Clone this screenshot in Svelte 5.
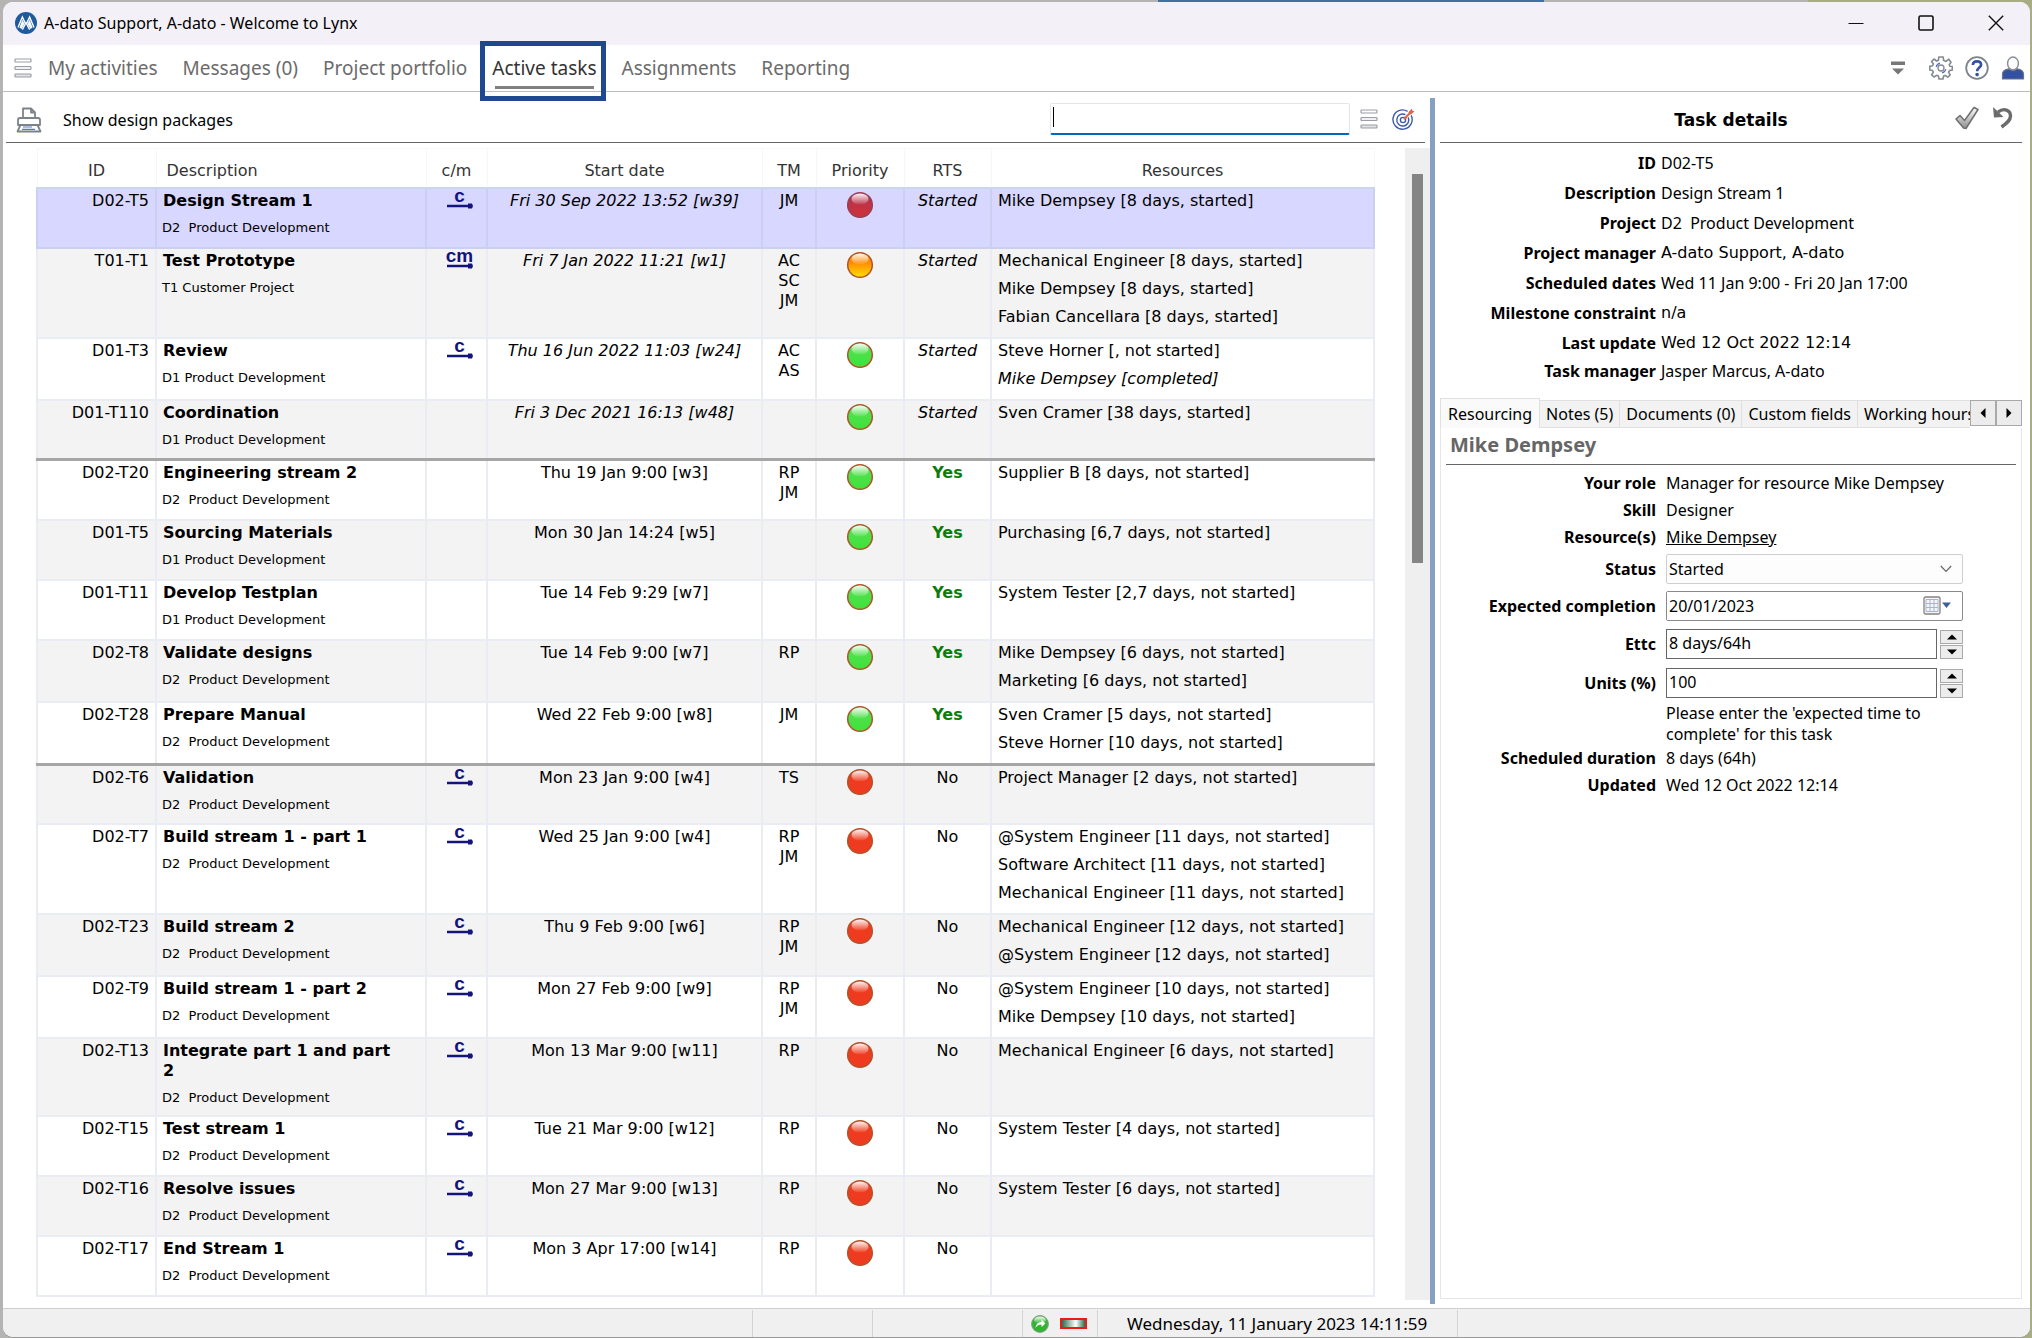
<script>
  const nav = ['My activities', 'Messages (0)', 'Project portfolio', 'Active tasks', 'Assignments', 'Reporting'];
  let active = $state('Active tasks');
  let query = $state('');
  let selected = $state('D02-T5');
  let tab = $state('Resourcing');
  let status = $state('Started');
  let completion = $state('20/01/2023');
  let ettc = $state('8 days/64h');
  let units = $state('100');

  const P1 = 'D1 Product Development';
  const P2 = 'D2\u00a0 Product Development';
  const t = (id, name, project, cm, date, tm, color, rts, res, end = false) => ({ id, name, project, cm, date, tm, color, rts, res, end });
  const tasks = [
    t('D02-T5', 'Design Stream 1', P2, 'c', 'Fri 30 Sep 2022 13:52 [w39]', ['JM'], 'red', 'Started', ['Mike Dempsey [8 days, started]']),
    t('T01-T1', 'Test Prototype', 'T1 Customer Project', 'cm', 'Fri 7 Jan 2022 11:21 [w1]', ['AC', 'SC', 'JM'], 'orange', 'Started', ['Mechanical Engineer [8 days, started]', 'Mike Dempsey [8 days, started]', 'Fabian Cancellara [8 days, started]']),
    t('D01-T3', 'Review', P1, 'c', 'Thu 16 Jun 2022 11:03 [w24]', ['AC', 'AS'], 'green', 'Started', ['Steve Horner [, not started]', 'Mike Dempsey [completed]']),
    t('D01-T110', 'Coordination', P1, '', 'Fri 3 Dec 2021 16:13 [w48]', [], 'green', 'Started', ['Sven Cramer [38 days, started]'], true),
    t('D02-T20', 'Engineering stream 2', P2, '', 'Thu 19 Jan 9:00 [w3]', ['RP', 'JM'], 'green', 'Yes', ['Supplier B [8 days, not started]']),
    t('D01-T5', 'Sourcing Materials', P1, '', 'Mon 30 Jan 14:24 [w5]', [], 'green', 'Yes', ['Purchasing [6,7 days, not started]']),
    t('D01-T11', 'Develop Testplan', P1, '', 'Tue 14 Feb 9:29 [w7]', [], 'green', 'Yes', ['System Tester [2,7 days, not started]']),
    t('D02-T8', 'Validate designs', P2, '', 'Tue 14 Feb 9:00 [w7]', ['RP'], 'green', 'Yes', ['Mike Dempsey [6 days, not started]', 'Marketing [6 days, not started]']),
    t('D02-T28', 'Prepare Manual', P2, '', 'Wed 22 Feb 9:00 [w8]', ['JM'], 'green', 'Yes', ['Sven Cramer [5 days, not started]', 'Steve Horner [10 days, not started]'], true),
    t('D02-T6', 'Validation', P2, 'c', 'Mon 23 Jan 9:00 [w4]', ['TS'], 'red', 'No', ['Project Manager [2 days, not started]']),
    t('D02-T7', 'Build stream 1 - part 1', P2, 'c', 'Wed 25 Jan 9:00 [w4]', ['RP', 'JM'], 'red', 'No', ['@System Engineer [11 days, not started]', 'Software Architect [11 days, not started]', 'Mechanical Engineer [11 days, not started]']),
    t('D02-T23', 'Build stream 2', P2, 'c', 'Thu 9 Feb 9:00 [w6]', ['RP', 'JM'], 'red', 'No', ['Mechanical Engineer [12 days, not started]', '@System Engineer [12 days, not started]']),
    t('D02-T9', 'Build stream 1 - part 2', P2, 'c', 'Mon 27 Feb 9:00 [w9]', ['RP', 'JM'], 'red', 'No', ['@System Engineer [10 days, not started]', 'Mike Dempsey [10 days, not started]']),
    t('D02-T13', 'Integrate part 1 and part 2', P2, 'c', 'Mon 13 Mar 9:00 [w11]', ['RP'], 'red', 'No', ['Mechanical Engineer [6 days, not started]']),
    t('D02-T15', 'Test stream 1', P2, 'c', 'Tue 21 Mar 9:00 [w12]', ['RP'], 'red', 'No', ['System Tester [4 days, not started]']),
    t('D02-T16', 'Resolve issues', P2, 'c', 'Mon 27 Mar 9:00 [w13]', ['RP'], 'red', 'No', ['System Tester [6 days, not started]']),
    t('D02-T17', 'End Stream 1', P2, 'c', 'Mon 3 Apr 17:00 [w14]', ['RP'], 'red', 'No', [])
  ];
  const details = [
    ['ID', 'D02-T5'],
    ['Description', 'Design Stream 1'],
    ['Project', P2],
    ['Project manager', 'A-dato Support, A-dato', true],
    ['Scheduled dates', 'Wed 11 Jan 9:00 - Fri 20 Jan 17:00'],
    ['Milestone constraint', 'n/a', true],
    ['Last update', 'Wed 12 Oct 2022 12:14', true],
    ['Task manager', 'Jasper Marcus, A-dato']
  ];
  const tabs = ['Resourcing', 'Notes (5)', 'Documents (0)', 'Custom fields', 'Working hours'];
</script>

{#snippet bars()}
  <svg class="bars" width="18" height="20" viewBox="0 0 18 20" aria-hidden="true">
    <g fill="#fff" stroke="#9a9da3" stroke-width="1.2">
      <rect x="1" y="1" width="16" height="3" rx=".8" />
      <rect x="1" y="8.5" width="16" height="3" rx=".8" fill="#eef0f4" />
      <rect x="1" y="16" width="16" height="3" rx=".8" fill="#e0e2e6" />
    </g>
  </svg>
{/snippet}

{#snippet arrow(dir)}
  <svg width="10" height="10" viewBox="0 0 10 10" aria-hidden="true" class="arrow {dir}">
    <path d="M0 7.5 L5 2.5 L10 7.5 Z" fill="currentColor" />
  </svg>
{/snippet}

<svg class="defs" width="0" height="0" aria-hidden="true">
  <defs>
    <linearGradient id="g-red" x1="0" y1="0" x2="0" y2="1"><stop offset="0" stop-color="#ef3b1c" /><stop offset="1" stop-color="#ee3a20" /></linearGradient>
    <linearGradient id="g-sel" x1="0" y1="0" x2="0" y2="1"><stop offset="0" stop-color="#b23452" /><stop offset="1" stop-color="#cf3036" /></linearGradient>
    <linearGradient id="g-orange" x1="0" y1="0" x2="0" y2="1"><stop offset=".4" stop-color="#ff8a00" /><stop offset="1" stop-color="#ffe000" /></linearGradient>
    <linearGradient id="g-green" x1="0" y1="0" x2="0" y2="1"><stop offset=".2" stop-color="#52e050" /><stop offset="1" stop-color="#3fe23a" /></linearGradient>
    <linearGradient id="shine" x1="0" y1="0" x2="0" y2="1"><stop offset="0" stop-color="#fff" stop-opacity=".95" /><stop offset="1" stop-color="#fff" stop-opacity=".05" /></linearGradient>
    <linearGradient id="steel" x1="0" y1="0" x2="0" y2="1"><stop offset="0" stop-color="#fff" /><stop offset="1" stop-color="#8d8d8d" /></linearGradient>
  </defs>
</svg>

<div class="desktop">
  <div class="window">
    <header class="title">
      <svg width="22" height="22" viewBox="0 0 22 22" aria-hidden="true">
        <circle cx="11" cy="11" r="11" fill="#1f5a9d" />
        <path d="M3 15.5 L7.4 5 L10.4 11.5 M11.6 11.5 L14.6 5 L19 15.5" fill="none" stroke="#fff" stroke-width="1.4" />
        <path d="M4.4 15.4 L7.4 7.4 L9.6 12 L6.6 17 Z M17.6 15.4 L14.6 7.4 L12.4 12 L15.4 17 Z" fill="#f2f7fc" />
        <path d="M7.4 17.6 L11 10.6 L14.6 17.6" fill="none" stroke="#fff" stroke-width="1.3" />
      </svg>
      <span class="caption">A-dato Support, A-dato - Welcome to Lynx</span>
      <div class="wincontrols">
        <button aria-label="Minimize"><svg width="16" height="16" viewBox="0 0 16 16"><path d="M.5 8.5 H15.5" stroke="#111" stroke-width="1.2" /></svg></button>
        <button aria-label="Maximize"><svg width="16" height="16" viewBox="0 0 16 16"><rect x="1" y="1" width="14" height="14" rx="1.5" fill="none" stroke="#111" stroke-width="1.6" /></svg></button>
        <button aria-label="Close"><svg width="16" height="16" viewBox="0 0 16 16"><path d="M.8 .8 L15.2 15.2 M15.2 .8 L.8 15.2" stroke="#111" stroke-width="1.4" /></svg></button>
      </div>
    </header>

    <nav class="menu">
      <button class="icon" aria-label="Menu">{@render bars()}</button>
      {#each nav as item}
        <button class="navitem" class:active={active === item} onclick={() => (active = item)}><span>{item}</span></button>
      {/each}
      <div class="tools">
        <button class="icon more" aria-label="More"><svg width="14" height="16" viewBox="0 0 14 16"><path d="M0 1.5 H14 V5 H0 Z M1 8.5 H13 L7 14.5 Z" fill="#777" /></svg></button>
        <button class="icon" aria-label="Settings">
          <svg width="24" height="24" viewBox="0 0 24 24" fill="none" stroke="#858a92" stroke-width="1.6" stroke-linejoin="round">
            <path d="M9.8 1 H14.2 L14.6 4.3 L17 5.4 L19.8 3.2 L22 6.2 L20.2 8.8 L20.8 10.2 L23.3 10.5 V14 L20.4 14.6 L19.6 16.4 L21.2 19 L18.8 21.2 L16.2 19.4 L14.6 20 L14 23 H10 L9.4 20 L7.6 19.3 L5 21 L2.6 18.6 L4.3 16.2 L3.6 14.5 L.8 14 V10.4 L3.6 9.8 L4.4 8 L2.6 5.6 L5 3 L7.6 5 L9.4 4.2 Z" />
            <path d="M7.2 11 A5 5 0 0 1 11 7.2 M16.8 13.2 A5 5 0 0 1 13 16.9" stroke="#5a74c4" stroke-width="1.3" />
            <circle cx="12" cy="12" r="3" stroke-width="1.3" />
          </svg>
        </button>
        <button class="icon" aria-label="Help">
          <svg width="24" height="24" viewBox="0 0 24 24" fill="none">
            <circle cx="12" cy="12" r="10.8" stroke="#7d838c" stroke-width="1.8" />
            <path d="M7.9 9 C8 6.6 9.7 5.4 12 5.4 C14.5 5.4 16.1 6.8 16.1 8.8 C16.1 11.6 12.2 11.7 12.2 15.2" stroke="#3350a2" stroke-width="2.6" />
            <circle cx="12.1" cy="18.6" r="1.8" fill="#3350a2" />
          </svg>
        </button>
        <button class="icon" aria-label="Account">
          <svg width="24" height="24" viewBox="0 0 24 24">
            <path d="M1.5 23 V18 C1.5 14.8 4 13.4 8 12.8 C10.5 15 13.5 15 16 12.8 C20 13.4 22.5 14.8 22.5 18 V23 Z" fill="#3350a2" stroke="#6c7486" stroke-width="1.2" />
            <ellipse cx="12" cy="7.4" rx="5.4" ry="6.4" fill="#fff" stroke="#8b9098" stroke-width="1.5" />
          </svg>
        </button>
      </div>
    </nav>

    <main>
      <section class="list">
        <div class="toolbar">
          <button class="icon" aria-label="Print">
            <svg width="26" height="26" viewBox="0 0 26 26" fill="none" stroke="#7d838a" stroke-width="1.8" stroke-linejoin="round">
              <path d="M7 11 V1.5 H15 L19 5.5 V11 M15 1.5 V5.5 H19" />
              <path d="M2 18 V13 Q2 11 4 11 H22 Q24 11 24 13 V18 Z" />
              <path d="M4.5 18 H21.5 L24.5 24.5 H1.5 Z" fill="#fff" />
              <path d="M7 20 H16 M6 22.4 H19" stroke="#5b74c2" stroke-width="1.2" />
            </svg>
          </button>
          <button class="link">Show design packages</button>
          <div class="search">
            <div class="searchbox"><input type="text" aria-label="Search" bind:value={query} /></div>
            <button class="icon" aria-label="Search options">{@render bars()}</button>
            <button class="icon" aria-label="Focus task">
              <svg width="23" height="23" viewBox="0 0 23 23" fill="none" stroke="#3d5bab" stroke-width="1.4">
                <path d="M19.2 7.4 A9.6 9.6 0 1 1 15.6 3.4" />
                <path d="M16.2 9.4 A6 6 0 1 1 13.4 6.6" />
                <circle cx="11" cy="12" r="2.6" />
                <path d="M12 11 L18 5" stroke="#d9674f" stroke-width="2" />
                <path d="M16.6 4 L20 .6 L20.4 2.8 L22.6 3.2 L19 6.6 L16.8 6.4 Z M11.6 11.6 L12.8 8.2 L15 10.4 Z" fill="#d9674f" stroke="none" />
              </svg>
            </button>
          </div>
        </div>

        <div class="scroller">
          <div class="tablewrap">
            <table>
              <colgroup><col class="c1" /><col class="c2" /><col class="c3" /><col class="c4" /><col class="c5" /><col class="c6" /><col class="c7" /><col /></colgroup>
              <thead>
                <tr><th>ID</th><th class="desc">Description</th><th>c/m</th><th>Start date</th><th>TM</th><th>Priority</th><th>RTS</th><th>Resources</th></tr>
              </thead>
              <tbody>
                {#each tasks as task}
                  <tr class:selected={selected === task.id} class:groupend={task.end} onclick={() => (selected = task.id)}>
                    <td class="id">{task.id}</td>
                    <td class="desc"><strong>{task.name}</strong><small>{task.project}</small></td>
                    <td class="cm">
                      {#if task.cm}<span class="mark">{task.cm}</span><svg width="26" height="6" viewBox="0 0 26 6" aria-hidden="true"><path d="M0 1.8 H21 V.6 H25 L26 3 L25 5.4 H21 V4.2 H0 Z" fill="#14147c" /></svg>{/if}
                    </td>
                    <td class="mid" class:it={task.rts === 'Started'}>{task.date}</td>
                    <td class="mid">{#each task.tm as m}<div>{m}</div>{/each}</td>
                    <td class="mid ball">
                      <svg width="28" height="28" viewBox="0 0 28 28" role="img" aria-label={task.color}>
                        <circle cx="14" cy="14" r="12.3" fill="url(#g-{selected === task.id ? 'sel' : task.color})" stroke={selected === task.id ? '#93405c' : '#b0542c'} stroke-width="1.5" />
                        <ellipse cx="14" cy="8" rx="8.5" ry="5.6" fill="url(#shine)" />
                      </svg>
                    </td>
                    <td class="mid" class:it={task.rts === 'Started'} class:yes={task.rts === 'Yes'}>{task.rts}</td>
                    <td class="res">{#each task.res as r}<div class:it={r.includes('completed')}>{r}</div>{/each}</td>
                  </tr>
                {/each}
              </tbody>
            </table>
          </div>
          <div class="track"><div class="thumb"></div></div>
        </div>
      </section>

      <aside>
        <div class="asidehead">
          <h2>Task details</h2>
          <div class="actions">
            <button class="icon" aria-label="Apply"><svg width="24" height="24" viewBox="0 0 24 24"><path d="M1 13 L5 9.5 L9.5 14.5 L19 1.5 L23 3.5 L11 22.5 L8.5 22 Z" fill="url(#steel)" stroke="#6f6f6f" stroke-width="1.5" stroke-linejoin="round" /></svg></button>
            <button class="icon" aria-label="Undo"><svg width="20" height="24" viewBox="0 0 20 24"><path d="M5 6 C11 1.5 17.5 4 17.5 10 C17.5 14.5 13.5 17.5 8.5 21" fill="none" stroke="#6b6b6b" stroke-width="3.4" /><path d="M0 1 L1 11.5 L10.5 11 Z" fill="#6b6b6b" /></svg></button>
          </div>
        </div>
        <dl class="details">
          {#each details as [k, v, wide]}
            <dt>{k}</dt><dd class:wide>{v}</dd>
          {/each}
        </dl>

        <div class="tabs">
          <div class="tablist" role="tablist">
            {#each tabs as name}
              <button role="tab" aria-selected={tab === name} class:on={tab === name} onclick={() => (tab = name)}>{name}</button>
            {/each}
          </div>
          <button class="step" aria-label="Previous tab">{@render arrow('left')}</button>
          <button class="step" aria-label="Next tab">{@render arrow('right')}</button>
        </div>
        <div class="panel">
          <h3>Mike Dempsey</h3>
          <div class="form">
            <span class="label">Your role</span><span>Manager for resource Mike Dempsey</span>
            <span class="label">Skill</span><span>Designer</span>
            <span class="label">Resource(s)</span><span><a href="#resource">Mike Dempsey</a></span>
            <label class="label" for="status">Status</label>
            <div class="field select">
              <select id="status" bind:value={status}><option>Started</option><option>Not started</option><option>Completed</option></select>
              <svg width="12" height="8" viewBox="0 0 12 8" aria-hidden="true"><path d="M.8 1 L6 6.5 L11.2 1" fill="none" stroke="#666" stroke-width="1.2" /></svg>
            </div>
            <label class="label" for="completion">Expected completion</label>
            <div class="field date">
              <input id="completion" type="text" bind:value={completion} />
              <button aria-label="Open calendar">
                <svg width="28" height="20" viewBox="0 0 28 20">
                  <rect x="1" y="1" width="16" height="17" rx="1.5" fill="#f3f5fa" stroke="#8a8080" stroke-width="1.3" />
                  <path d="M3 3.5 H15 M3 7.5 H15 M3 11.5 H15 M3 15.5 H15 M3 3.5 V15.5 M7 3.5 V15.5 M11 3.5 V15.5 M15 3.5 V15.5" stroke="#a9b4cb" />
                  <path d="M19 6.5 H28 L23.5 12 Z" fill="#3f5f96" />
                </svg>
              </button>
            </div>
            <label class="label" for="ettc">Ettc</label>
            <div class="field spin">
              <input id="ettc" type="text" bind:value={ettc} />
              <div class="steps"><button aria-label="Increase ettc">{@render arrow('up')}</button><button aria-label="Decrease ettc">{@render arrow('down')}</button></div>
            </div>
            <label class="label" for="units">Units (%)</label>
            <div class="field spin">
              <input id="units" type="text" bind:value={units} />
              <div class="steps"><button aria-label="Increase units">{@render arrow('up')}</button><button aria-label="Decrease units">{@render arrow('down')}</button></div>
            </div>
            <span></span><p>Please enter the 'expected time to complete' for this task</p>
            <span class="label">Scheduled duration</span><span>8 days (64h)</span>
            <span class="label">Updated</span><span>Wed 12 Oct 2022 12:14</span>
          </div>
        </div>
      </aside>
    </main>

    <footer>
      <div class="cell s1"></div>
      <div class="cell s2"></div>
      <div class="cell s3"></div>
      <div class="cell s4">
        <svg width="18" height="18" viewBox="0 0 18 18" aria-hidden="true"><circle cx="9" cy="9" r="8.4" fill="#2fb52f" stroke="#8a9a8a" /><ellipse cx="9" cy="5" rx="6" ry="3.5" fill="url(#shine)" /><path d="M4.5 13 C5 8.5 8 7 10.5 7 V4.5 L14.5 8.5 L10.5 12 V9.6 C8 9.6 6 10.5 4.5 13 Z" fill="#fff" /></svg>
        <span class="signal"></span>
      </div>
      <div class="cell s5">Wednesday, 11 January 2023 14:11:59</div>
    </footer>
  </div>
</div>

<style>
  :global(body) { margin: 0; }
  * { box-sizing: border-box; }
  button { font: inherit; color: inherit; background: none; border: 0; padding: 0; cursor: pointer; }
  button svg { display: block; }
  .defs { position: absolute; }
  .desktop { min-height: 100vh; display: flex; padding: 2px 2px 1px 3px; background: linear-gradient(90deg, #b4b4b2 57%, #41719c 57%, #41719c 76%, #b4b4b2 76%, #b4b4b2 89%, #a9ad84 89%); font: 16px/20px "Noto Sans", "Segoe UI", sans-serif; color: #000; }
  .window { flex: 1; min-width: 0; display: flex; flex-direction: column; background: #fff; border-radius: 10px; overflow: hidden; box-shadow: 0 1px #9a9a9a; }

  .title { display: flex; align-items: center; height: 43px; padding: 0 0 2px 12px; background: #f3f1f7; }
  .caption { flex: 1; padding-left: 7px; }
  .wincontrols { display: flex; gap: 54px; padding-right: 26px; }

  .menu { display: flex; align-items: center; height: 47px; padding: 0 5px 0 11px; border-bottom: 1px solid #bdbdbd; font-size: 19px; color: #6b6b6b; }
  .icon { display: flex; align-items: center; }
  .navitem { position: relative; margin-left: 25px; }
  .menu .icon + .navitem { margin-left: 16px; }
  .navitem.active { color: #333; }
  .navitem.active::before { content: ""; position: absolute; left: -12px; right: -9px; top: -17px; bottom: -23px; border: 5px solid #1f4890; }
  .navitem.active::after { content: ""; position: absolute; left: 3px; right: 3px; bottom: -11px; height: 3px; background: #808080; }
  .tools { margin-left: auto; display: flex; align-items: center; gap: 12px; }
  .more { margin-right: 12px; }

  main { flex: 1; display: flex; min-height: 0; padding-top: 6px; }
  .list { flex: 1; min-width: 0; display: flex; flex-direction: column; }
  .toolbar { display: flex; align-items: center; height: 45px; margin: 0 5px 0 3px; padding: 0 10px 0 10px; border-bottom: 1px solid #666; }
  .link { margin-left: 21px; }
  .search { margin-left: auto; display: flex; align-items: center; gap: 10px; padding-bottom: 2px; }
  .searchbox { position: relative; width: 300px; }
  .searchbox input { display: block; width: 100%; height: 32px; border: 1px solid #e3e6ea; border-bottom: 2px solid #0067c0; border-radius: 2px; padding: 0 3px; font: inherit; outline: 0; background: #fff; }
  .searchbox::after { content: ""; position: absolute; left: 3px; top: 4px; width: 1px; height: 20px; background: #000; }
  .search .icon + .icon { margin-left: 4px; }

  .scroller { flex: 1; display: flex; padding: 5px 0 8px 33px; font: 16px/20px "DejaVu Sans", Verdana, sans-serif; }
  .tablewrap { flex: 1; min-width: 0; padding-right: 30px; }
  table { width: 100%; table-layout: fixed; border-collapse: collapse; }
  .c1 { width: 119px; } .c2 { width: 270px; } .c3 { width: 61px; } .c4 { width: 275px; }
  .c5 { width: 54px; } .c6 { width: 88px; } .c7 { width: 87px; }
  th { height: 39px; padding: 6px 0 0; font-weight: 400; color: #333; border: 1px solid #f7f7f9; border-bottom: 2px solid #c9d8e6; }
  th.desc { text-align: left; padding-left: 10px; }
  td { height: 60px; padding: 2px 6px; vertical-align: top; border: 2px solid #e9ecf3; }
  tbody tr:nth-child(even) { background: #f3f3f3; }
  tbody tr.selected { background: #d7d7ff; }
  tbody tr.selected td { border-color: #cbcff0; }
  tr.groupend td { border-bottom: 3px solid #a6a6a6; }
  td.id { text-align: right; }
  td.desc { padding-right: 28px; padding-bottom: 8px; }
  td.desc strong { display: block; }
  td.desc small { display: block; font-size: 13px; line-height: 18px; padding-top: 8px; margin: 0 -20px 0 -1px; }
  td.cm { padding: 0 0 0 6px; text-align: center; }
  td.cm svg { display: block; margin: 1px auto 0; }
  .mark { display: block; font: bold 19px/13px "Liberation Sans", Arial, sans-serif; color: #14147c; }
  td.mid { text-align: center; padding-left: 0; padding-right: 0; }
  td.ball svg { display: block; margin: 0 auto; }
  td.res div { height: 28px; white-space: nowrap; }
  .it { font-style: italic; }
  .yes { font-weight: 700; color: #0a7d0a; }
  .track { width: 25px; padding: 26px 7px 0; background: #efefef; }
  .thumb { height: 389px; background: #858585; }

  aside { width: 600px; flex: none; display: flex; flex-direction: column; padding: 0 8px 5px 5px; border-left: 5px solid #84a0c2; margin-bottom: 4px; }
  .asidehead { display: grid; grid-template-columns: 1fr auto 1fr; align-items: center; height: 45px; padding: 0 9px; border-bottom: 1px solid #666; }
  .actions { display: flex; justify-content: flex-end; gap: 14px; padding-bottom: 4px; }
  h2 { grid-column: 2; margin: 0; font: bold 17px/20px "DejaVu Sans", Verdana, sans-serif; }
  .details { display: grid; grid-template-columns: 216px 1fr; column-gap: 5px; grid-template-rows: repeat(7, 30px) 26px; align-items: center; margin: 0; padding: 5px 0 14px; }
  dt { text-align: right; font-weight: 700; }
  dd { margin: 0; }
  dd.wide { font-family: "DejaVu Sans", Verdana, sans-serif; }
  .tabs { display: flex; align-items: flex-end; height: 30px; }
  .tablist { flex: 1; min-width: 0; display: flex; align-items: flex-end; overflow: hidden; }
  .tablist button { flex: none; height: 28px; padding: 0 6px; background: #f2f2f2; border: 1px solid #e0e0e0; border-left-width: 0; white-space: nowrap; }
  .tablist button.on { height: 30px; padding: 0 7px; background: #fafafa; border-left-width: 1px; border-bottom: 0; }
  .step { width: 26px; height: 26px; display: grid; place-items: center; background: #ececec; border: 1px solid #a9a9a9; align-self: center; }
  .arrow.left { rotate: -90deg; } .arrow.right { rotate: 90deg; } .arrow.down { rotate: 180deg; }
  .panel { flex: 1; border: 1px solid #e6e6e6; border-top: 0; padding: 4px 5px; }
  h3 { margin: 0; padding: 0 4px 6px; font: bold 20px/26px "Noto Sans", sans-serif; color: #666; border-bottom: 1px solid #666; }
  .form { display: grid; grid-template-columns: 210px minmax(0, 297px); column-gap: 10px; grid-template-rows: 27px 27px 27px 36px 38px 38px 40px; grid-auto-rows: auto; align-items: center; padding-top: 5px; }
  .form > * { line-height: 21px; }
  .form > :nth-last-child(-n + 4) { line-height: 27px; }
  .label { text-align: right; font-weight: 700; }
  a { color: inherit; }
  .field { display: flex; align-items: center; height: 30px; }
  .field input, .field select { flex: 1; min-width: 0; height: 100%; font: inherit; color: inherit; padding: 0 2px; margin: 0; border: 1px solid #666; background: #fff; border-radius: 0; appearance: none; outline: 0; }
  .field.select { display: grid; grid-template-columns: 1fr 22px; align-items: center; border: 1px solid #d0d0d0; border-radius: 2px; background: #fdfdfd; }
  .field.select select { grid-area: 1 / 1 / 2 / 3; border: 0; background: none; }
  .field.select svg { grid-area: 1 / 2; pointer-events: none; }
  .field.date { border: 1px solid #8a8a8a; padding-right: 11px; border-radius: 2px; }
  .field.date input { border: 0; }
  .spin { gap: 3px; }
  .field.spin input { padding-bottom: 3px; }
  .steps { display: flex; flex-direction: column; gap: 1px; width: 23px; }
  .steps button { height: 14px; display: grid; place-items: center; background: #ececec; border: 1px solid #a9a9a9; }
  p { margin: 0; }

  footer { display: flex; height: 29px; background: #f0f0f0; border-top: 1px solid #cfcfcf; font-size: 18px; line-height: 28px; }
  .cell { border-right: 1px solid #d4d4d4; margin-top: 1px; }
  .s1 { width: 750px; } .s2 { width: 120px; } .s3 { width: 150px; } .s4 { width: 75px; display: flex; align-items: center; gap: 11px; padding-left: 8px; }
  .s5 { padding-left: 29px; width: 360px; white-space: nowrap; font-size: 17px; }
  .signal { width: 27px; height: 11px; border: 2px solid #f01818; background: linear-gradient(90deg, #2e6b50, #fff 60%, #2e6b50); }
</style>
